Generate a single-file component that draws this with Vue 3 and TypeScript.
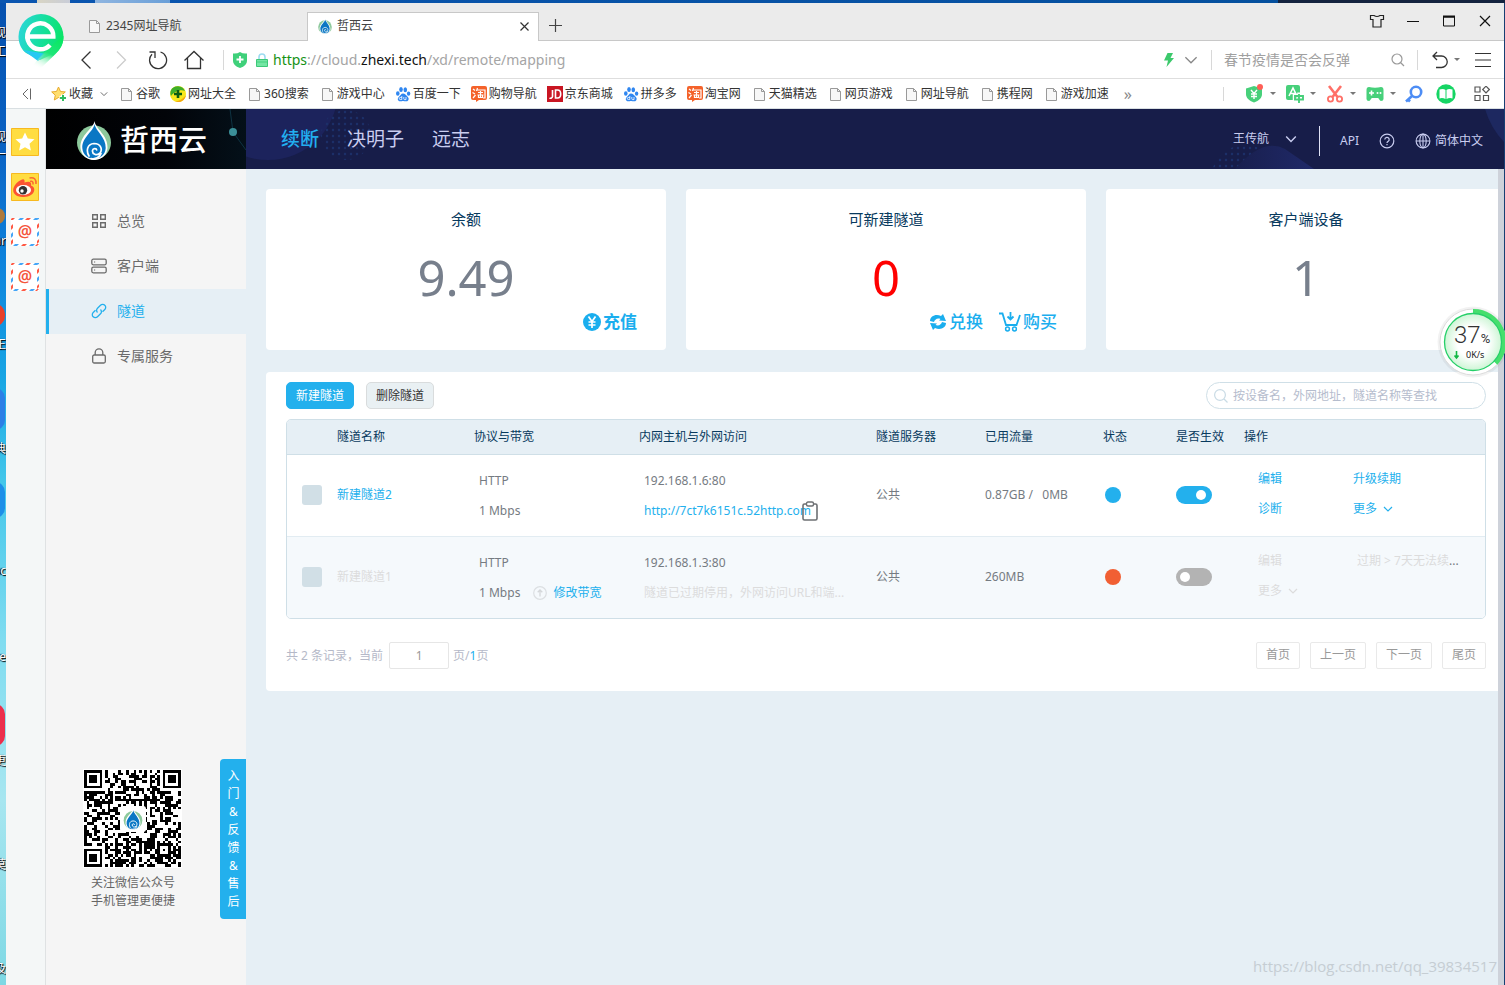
<script setup lang="ts">
import { ref } from 'vue'

interface Bookmark { icon: string; label: string }
interface DesktopLabel { text: string; y: number }
interface Tunnel {
  name: string
  host: string
  url: string
  traffic: string
  expired: boolean
  enabled: boolean
  selected: boolean
}

const bookmarks: Bookmark[] = [
  { icon: 'page', label: '谷歌' },
  { icon: 'plus360', label: '网址大全' },
  { icon: 'page', label: '360搜索' },
  { icon: 'page', label: '游戏中心' },
  { icon: 'paw', label: '百度一下' },
  { icon: 'tao', label: '购物导航' },
  { icon: 'jd', label: '京东商城' },
  { icon: 'paw', label: '拼多多' },
  { icon: 'tao', label: '淘宝网' },
  { icon: 'page', label: '天猫精选' },
  { icon: 'page', label: '网页游戏' },
  { icon: 'page', label: '网址导航' },
  { icon: 'page', label: '携程网' },
  { icon: 'page', label: '游戏加速' },
]

const tools = [
  { icon: 'yenshield', label: '购物助手', caret: true },
  { icon: 'translate', label: '翻译', caret: true },
  { icon: 'scissors', label: '截图', caret: true },
  { icon: 'gamepad', label: '游戏', caret: true },
]

const menu = [
  { icon: 'grid', label: '总览', active: false },
  { icon: 'server', label: '客户端', active: false },
  { icon: 'link', label: '隧道', active: true },
  { icon: 'lock', label: '专属服务', active: false },
]

const desktopLabels: DesktopLabel[] = [
  { text: '现', y: 24 },
  { text: '工', y: 43 },
  { text: '现', y: 128 },
  { text: '一', y: 146 },
  { text: 'ar', y: 232 },
  { text: '正', y: 336 },
  { text: '典', y: 440 },
  { text: 'oc', y: 562 },
  { text: 'e', y: 648 },
  { text: '更', y: 752 },
  { text: '莫', y: 856 },
  { text: '及', y: 960 },
]

const tunnels = ref<Tunnel[]>([
  { name: '新建隧道2', host: '192.168.1.6:80', url: 'http://7ct7k6151c.52http.com', traffic: '0.87GB /\u00a0 \u00a00MB', expired: false, enabled: true, selected: false },
  { name: '新建隧道1', host: '192.168.1.3:80', url: '', traffic: '260MB', expired: true, enabled: false, selected: false },
])

const keyword = ref('')
const pageNo = ref('1')

/* Modules of the follow-us code: three finders, one alignment mark, data elsewhere. */
const N = 37
function finder(x: number, y: number, ox: number, oy: number): boolean | null {
  const dx = x - ox
  const dy = y - oy
  if (dx < -1 || dy < -1 || dx > 7 || dy > 7) return null
  if (dx < 0 || dy < 0 || dx > 6 || dy > 6) return false
  const ring = Math.max(Math.abs(dx - 3), Math.abs(dy - 3))
  return ring !== 2
}
function buildCode(): string {
  let seed = 20394
  let d = ''
  for (let y = 0; y < N; y++) {
    for (let x = 0; x < N; x++) {
      seed = (seed * 1103515245 + 12345) % 2147483648
      let on = (seed >> 12) % 100 < 50
      for (const [ox, oy] of [[0, 0], [N - 7, 0], [0, N - 7]]) {
        const f = finder(x, y, ox, oy)
        if (f !== null) on = f
      }
      const a = Math.max(Math.abs(x - 30), Math.abs(y - 30))
      if (a <= 2) on = a !== 1
      if (on) d += `M${x} ${y}h1v1h-1z`
    }
  }
  return d
}
const codePath = buildCode()
</script>

<template>
  <div class="desktop">
    <svg width="0" height="0" class="sprite" aria-hidden="true">
      <symbol id="page" viewBox="0 0 16 16"><path d="M3.500 2.500h7l3 3v9h-10z" fill="#f7f7f7" stroke="#999" /><path d="M10.500 2.500v3h3" fill="none" stroke="#999" /></symbol>
      <symbol id="plus360" viewBox="0 0 16 16"><circle cx="8" cy="8" r="8" fill="#f8e71c" /><path d="M1 4A8 8 0 0 1 15 5C10 3 4 6 1 10A8 8 0 0 1 1 4z" fill="#3fae29" /><path d="M16 9A8 8 0 0 1 5 15.500C10 15 14 12 16 9z" fill="#f5a80c" /><path d="M8 4v8M4 8h8" stroke="#0a5c12" stroke-width="2.600" /></symbol>
      <symbol id="paw" viewBox="0 0 16 16"><g fill="#2f86f0"><ellipse cx="2.800" cy="7.500" rx="1.800" ry="2.300" /><ellipse cx="6" cy="3.600" rx="1.800" ry="2.500" /><ellipse cx="10.300" cy="3.700" rx="1.800" ry="2.500" /><ellipse cx="13.600" cy="7.600" rx="1.700" ry="2.200" /><path d="M8 7.500c-2 0-2.500 2-4 3.300C2 12.500 2.600 15.300 5.300 15.300c1.200 0 1.800-.3 2.900-.3s2 .4 3.200.3c2.400-.2 3-3 1.200-4.600C11 9.300 10 7.500 8 7.500z" /></g><path d="M6.800 10v3.500H5.300a1 1 0 0 1 0-2h1.500M8.800 11v1.800q0 .8.800.8h1.400V11" stroke="#fff" stroke-width=".8" fill="none" /></symbol>
      <symbol id="tao" viewBox="0 0 16 16"><path d="M2 0h12a2 2 0 0 1 2 2v10a2 2 0 0 1-2 2H8l-3 2v-2H2a2 2 0 0 1-2-2V2a2 2 0 0 1 2-2z" fill="#f4622a" /><path d="M2 3l2 1.500M1.500 6.500L4 8M2 12l2.500-3M6.500 2L5.500 5M6 4h8v8h-2M7 6.500h5M6.500 9h6M9.500 5v6.500M7.500 9.500v2h4v-2" fill="none" stroke="#fff" stroke-width="1.200" /></symbol>
      <symbol id="jd" viewBox="0 0 16 16"><path d="M0 0h16v16H0z" fill="#c91623" /><path d="M5.500 4v6.500a2 2 0 0 1-3 1.500M8.500 4v8h2q3.200 0 3.200-4T10.500 4z" fill="none" stroke="#fff" stroke-width="1.600" /></symbol>
      <symbol id="yenshield" viewBox="0 0 20 20"><path d="M9 2l8 2.500V10c0 4-3 6.500-8 8.500C4 16.500 1 14 1 10V4.500z" fill="#47d07a" /><path d="M6 6l3 3.500L12 6M9 9.500V15M6 10h6M6 12.500h6" stroke="#fff" stroke-width="1.400" fill="none" /><circle cx="15" cy="3" r="3" fill="#ff5f57" /></symbol>
      <symbol id="translate" viewBox="0 0 20 20"><path d="M3 1h10q2 0 2 2v13H3q-2 0-2-2V3q0-2 2-2z" fill="#47d07a" /><path d="M4 12L8 4l4 8M5.500 9.500h5" stroke="#fff" stroke-width="1.600" fill="none" /><path d="M14 8.500v10M9.500 11.500h9v4h-9z" fill="none" stroke="#fff" stroke-width="3.500" /><path d="M14 10v9M10 12h8v3.500h-8z" fill="none" stroke="#47d07a" stroke-width="1.900" /></symbol>
      <symbol id="scissors" viewBox="0 0 20 20"><path d="M4 2l8.500 11M16 2L7.500 13" stroke="#ff7068" stroke-width="2.600" fill="none" /><circle cx="5.500" cy="15" r="2.600" fill="none" stroke="#ff7068" stroke-width="1.800" /><circle cx="14.500" cy="15" r="2.600" fill="none" stroke="#ff7068" stroke-width="1.800" /></symbol>
      <symbol id="gamepad" viewBox="0 0 20 20"><path d="M4 3q6 1.500 12 0q2.500 0 2.500 3v9q0 2-2.500 2c-1.500 0-2-3-3-3H7c-1 0-1.500 3-3 3q-2.500 0-2.500-2V6q0-3 2.500-3z" fill="#47d07a" /><path d="M6.500 6.500v5M4 9h5" stroke="#fff" stroke-width="1.600" /><circle cx="12.500" cy="9" r="1" fill="#fff" /><circle cx="15.500" cy="9" r="1" fill="#fff" /></symbol>
      <symbol id="drop" viewBox="0 0 34 40"><circle cx="17" cy="22.500" r="17" fill="#8dc99c" /><path d="M17.500 1C17 8 2.500 15 3.500 28c.8 8 7 12 13.500 12s13-4 13.500-12C31 15 18.500 9 17.500 1z" fill="#fff" /><path d="M17.500 4C17 11 5 17 5.300 28c.5 7 6 10.800 11.700 10.800S28.300 35 28.700 28C29 17 18.500 11 17.500 4z" fill="#0a77c4" /><path d="M12 36c-3-5-2-12 5-12.500 7 0 9 6.500 5.500 10-3 2.500-7.500.5-7-3 .5-2.500 4-2.500 4.200-.5M14 38.500c4 1 9-1 10-5" fill="none" stroke="#fff" stroke-width="1.700" stroke-linecap="round" /></symbol>
      <symbol id="grid" viewBox="0 0 16 16"><path d="M1.700 1.700h4.600v4.600H1.700zM9.700 1.700h4.600v4.600H9.700zM1.700 9.700h4.600v4.600H1.700zM9.700 9.700h4.600v4.600H9.700z" fill="none" stroke="currentColor" stroke-width="1.400" /></symbol>
      <symbol id="server" viewBox="0 0 16 16"><rect x=".8" y="1.200" width="14.400" height="5.600" rx="1.500" fill="none" stroke="currentColor" stroke-width="1.300" /><rect x=".8" y="9.200" width="14.400" height="5.600" rx="1.500" fill="none" stroke="currentColor" stroke-width="1.300" /><path d="M3 4h1.200M3 12h1.200" stroke="currentColor" /></symbol>
      <symbol id="link" viewBox="0 0 16 16"><g fill="none" stroke="currentColor" stroke-width="1.300"><path d="M6.500 9.500a3 3 0 0 1 0-4.300l3-3a3 3 0 0 1 4.300 0 3 3 0 0 1 0 4.300L11.500 8.800" /><path d="M9.500 6.500a3 3 0 0 1 0 4.300l-3 3a3 3 0 0 1-4.300 0 3 3 0 0 1 0-4.300L4.500 7.200" /></g></symbol>
      <symbol id="lock" viewBox="0 0 16 16"><path d="M4.200 7V4.600a3.800 3.800 0 0 1 7.600 0V7" fill="none" stroke="currentColor" stroke-width="1.300" /><rect x="1.700" y="7" width="12.600" height="8" rx="1.500" fill="none" stroke="currentColor" stroke-width="1.300" /></symbol>
      <symbol id="chevron" viewBox="0 0 10 10"><path d="M1 3l4 4 4-4" fill="none" stroke="currentColor" stroke-width="1.200" /></symbol>
      <symbol id="stripmail" viewBox="0 0 28 28">
        <path d="M0 0h28v28H0z" fill="#fff" />
        <path d="M1 0h3L2 2H0V1zM16 0h4l-2 2h-4zM28 5v4l-2 2V7zM28 21v3l-2 2v-3zM12 26h4l-2 2h-4zM26 26h2l-2 2h-2zM0 8l2-2v4l-2 2zM0 23l2-2v4l-2 2z" fill="#ff5a45" />
        <path d="M9 0h4l-2 2H7zM24 0h4v1l-2 1h-4zM28 13v4l-2 2v-4zM20 26h4l-2 2h-4zM4 26h4l-2 2H2zM0 16l2-2v4l-2 2z" fill="#45a6f7" />
      </symbol>
    </svg>

    <div class="wallpaper-icons" aria-hidden="true">
      <i class="blob b-brown"></i><i class="blob b-red"></i><i class="blob b-blue"></i><i class="blob b-sky"></i><i class="blob b-crimson"></i>
      <span v-for="(l, i) in desktopLabels" :key="i" class="wall-label" :style="{ top: l.y + 'px' }">{{ l.text }}</span>
    </div>

    <div class="window">
      <svg class="brand" width="46" height="56" viewBox="0 0 46 56" aria-hidden="true">
        <defs>
          <linearGradient id="bg1" x1="0" y1="0.300" x2="1" y2="0.500"><stop offset="0" stop-color="#2bd6d8" /><stop offset=".5" stop-color="#16dfa0" /><stop offset="1" stop-color="#0be467" /></linearGradient>
          <linearGradient id="bg2" x1=".8" y1="0" x2=".3" y2="1"><stop offset="0" stop-color="#07e862" /><stop offset=".5" stop-color="#1ee678" /><stop offset="1" stop-color="#fff" stop-opacity="0" /></linearGradient>
        </defs>
        <path d="M23 0a22.500 22.500 0 0 1 22.500 22.500c0 7-3 12-7 16L22 46 8 39C3 35 .5 29 .5 22.500A22.500 22.500 0 0 1 23 0z" fill="url(#bg1)" />
        <path d="M5 36L20 47l8-7-10-2z" fill="#27c9f2" />
        <path d="M20 45l14-14 11.500-9c0 8-3 13-8 18L24 53q-5 4-12 2z" fill="url(#bg2)" />
        <path d="M10 22.500h25.300A13 13 0 1 0 32 31" fill="none" stroke="#fff" stroke-width="4.500" />
      </svg>

      <header class="tabs">
        <div class="tab">
          <svg width="16" height="16"><use href="#page" /></svg><span>2345网址导航</span>
        </div>
        <div class="tab current">
          <svg width="14" height="16"><use href="#drop" /></svg><span>哲西云</span>
          <button class="plain close" aria-label="关闭标签"><svg width="9" height="9" viewBox="0 0 9 9"><path d="M.5.5l8 8M8.500.5l-8 8" stroke="#333" stroke-width="1.200" /></svg></button>
        </div>
        <button class="plain add" aria-label="新标签"><svg width="13" height="13" viewBox="0 0 13 13"><path d="M6.500 0v13M0 6.500h13" stroke="#444" stroke-width="1.200" /></svg></button>
        <div class="winctl">
          <button class="plain" aria-label="皮肤"><svg width="16" height="16" viewBox="0 0 16 16"><path d="M1.500 2.500h3.500q3 2 6 0h3.500v4h-2.500v7.500h-8V6.500H1.500z" fill="none" stroke="#222" stroke-width="1.200" /></svg></button>
          <button class="plain" aria-label="最小化"><svg width="12" height="12" viewBox="0 0 12 12"><path d="M0 6.500h12" stroke="#111" /></svg></button>
          <button class="plain" aria-label="最大化"><svg width="12" height="12" viewBox="0 0 12 12"><path d="M.5 2h11v9H.5z" fill="none" stroke="#111" /><path d="M0 1.500h12" stroke="#111" stroke-width="2" /></svg></button>
          <button class="plain" aria-label="关闭"><svg width="12" height="12" viewBox="0 0 12 12"><path d="M1 1l10 10M11 1L1 11" stroke="#111" stroke-width="1.200" /></svg></button>
        </div>
      </header>

      <div class="address">
        <div class="navbtns">
          <button class="plain" aria-label="后退"><svg width="20" height="20" viewBox="0 0 20 20"><path d="M14.500 1.500L6 10l8.500 8.500" fill="none" stroke="#333" stroke-width="1.300" /></svg></button>
          <button class="plain" aria-label="前进"><svg width="20" height="20" viewBox="0 0 20 20"><path d="M5 1.500l8.500 8.500L5 18.500" fill="none" stroke="#ccc" stroke-width="1.300" /></svg></button>
          <button class="plain" aria-label="刷新"><svg width="20" height="20" viewBox="0 0 20 20"><path d="M12.500 2A8.500 8.500 0 1 1 4 4.200M1.500 2H7v6" fill="none" stroke="#333" stroke-width="1.300" /></svg></button>
          <button class="plain" aria-label="主页"><svg width="20" height="20" viewBox="0 0 20 20"><path d="M.5 10.500L10 1.500l9.500 9M3.500 8v10.500h13V8" fill="none" stroke="#333" stroke-width="1.300" /></svg></button>
        </div>
        <i class="sep"></i>
        <svg class="shield" width="14" height="16" viewBox="0 0 14 16"><path d="M0 1.500Q4 2 7 0q3 2 7 1.500V9q0 4.500-7 7-7-2.500-7-7z" fill="#3fd07a" /><path d="M7 4v7M3.500 7.500h7" stroke="#fff" stroke-width="1.800" /></svg>
        <svg class="padlock" width="12" height="14" viewBox="0 0 12 14"><path d="M3 7V4a3 3 0 0 1 6 0v3" fill="none" stroke="#9edcf0" stroke-width="1.600" /><path d="M.5 6.500h11v7H.5z" fill="#74e6a4" stroke="#3cc878" /><path d="M1 9h10" stroke="#45d07f" /></svg>
        <div class="url"><span class="scheme">https</span><span>://cloud.</span><b>zhexi.tech</b><span>/xd/remote/mapping</span></div>
        <svg class="bolt" width="10" height="14" viewBox="0 0 10 14"><path d="M3.500 0H9L6.500 5H10L2.500 14 4 7.500H0z" fill="#3cc96c" /></svg>
        <svg class="down" width="14" height="14" viewBox="0 0 10 10"><path d="M1 3l4 4 4-4" fill="none" stroke="#888" stroke-width=".9" /></svg>
        <i class="sep"></i>
        <input class="quick" aria-label="搜索" placeholder="春节疫情是否会反弹">
        <button class="plain mag" aria-label="搜索"><svg width="14" height="14" viewBox="0 0 14 14"><circle cx="6" cy="6" r="5" fill="none" stroke="#999" stroke-width="1.200" /><path d="M9.500 9.500l3.500 3.500" stroke="#999" stroke-width="1.200" /></svg></button>
        <i class="sep"></i>
        <button class="plain undo" aria-label="恢复"><svg width="16" height="18" viewBox="0 0 16 18"><path d="M5 1L1 5l4 4M1 5h8.500a5.500 5.500 0 0 1 0 11.500H4" fill="none" stroke="#333" stroke-width="1.300" /></svg></button>
        <i class="caret"></i>
        <button class="plain burger" aria-label="菜单"><svg width="16" height="14" viewBox="0 0 16 14"><path d="M0 .5h16M0 7h16M0 13.500h16" stroke="#333" stroke-width="1.200" /></svg></button>
      </div>

      <nav class="bookmarks">
        <button class="plain fold" aria-label="收起"><svg width="10" height="12" viewBox="0 0 10 12"><path d="M6 1L1 6l5 5M8.500.5v11" fill="none" stroke="#666" /></svg></button>
        <a href="#" class="mark">
          <svg width="16" height="16" viewBox="0 0 16 16"><path d="M7.500 1l2 4.500 4.800.4-3.600 3.300 1 4.800-4.200-2.500L3.300 14l1-4.800L.7 5.900l4.800-.4z" fill="#ffdf70" stroke="#e8ab2d" /><path d="M12 8.500v7M8.500 12h7" stroke="#fff" stroke-width="4" /><path d="M12 9v6M9 12h6" stroke="#2fbd5e" stroke-width="2" /></svg>
          <span>收藏</span><svg class="tiny" width="8" height="8"><use href="#chevron" /></svg>
        </a>
        <a v-for="(b, i) in bookmarks" :key="i" href="#" class="mark">
          <svg width="16" height="16"><use :href="'#' + b.icon" /></svg><span>{{ b.label }}</span>
        </a>
        <span class="more">»</span>
        <div class="tools">
          <i class="sep small"></i>
          <span v-for="t in tools" :key="t.icon" class="tool">
            <button class="plain" :aria-label="t.label"><svg width="20" height="20"><use :href="'#' + t.icon" /></svg></button><i class="caret"></i>
          </span>
          <button class="plain key" aria-label="查找"><svg width="20" height="20" viewBox="0 0 20 20"><circle cx="12" cy="8" r="5.200" fill="none" stroke="#4d8df5" stroke-width="2.600" /><path d="M8 12l-6 5.500M4 15.500l2 2" stroke="#4d8df5" stroke-width="2.600" /></svg></button>
          <button class="plain book" aria-label="阅读"><svg width="20" height="20" viewBox="0 0 20 20"><circle cx="10" cy="10" r="9.700" fill="#16d564" /><path d="M3.500 5.500q4-1 6 .5v9q-3-1.500-6-.5zM16.500 5.500q-4-1-6 .5v9q3-1.500 6-.5z" fill="#fff" /></svg></button>
          <button class="plain apps" aria-label="扩展"><svg width="16" height="16" viewBox="0 0 16 16"><path d="M1 1h5v5H1zM1 9.500h5v5H1zM9.500 9.500h5v5h-5zM12 .2l3.300 3.300L12 6.800 8.700 3.500z" fill="none" stroke="#555" stroke-width="1.200" /></svg></button>
        </div>
      </nav>

      <div class="page">
        <aside class="strip">
          <button class="plain" aria-label="收藏夹"><svg width="28" height="28" viewBox="0 0 28 28"><path d="M.5.5h27v27H.5z" fill="#ffdd42" stroke="#f7b920" /><path d="M14 4.500l2.800 6 6.700.8-5 4.500 1.400 6.700-5.900-3.300-5.900 3.300 1.400-6.700-5-4.500 6.700-.8z" fill="#fff" /></svg></button>
          <button class="plain" aria-label="微博"><svg width="28" height="28" viewBox="0 0 28 28"><path d="M.5.5h27v27H.5z" fill="#ffdd42" stroke="#f7b920" /><path d="M10 7c3-2 4 0 3.500 2.500 5-2 7.500 0 6.500 3 6 2 4 11-7 11.500C5 24.500 1 20 2.500 15 4 11 7 8.500 10 7z" fill="#fb5432" /><ellipse cx="12.500" cy="17" rx="7.500" ry="5" fill="#fff" /><circle cx="12" cy="17.200" r="4.200" fill="#333" /><circle cx="11" cy="18" r="1.700" fill="#fff" /><path d="M18.500 5q7-1.500 6.500 6M19 8.500q3.500-1 3 3" fill="none" stroke="#fb6a32" stroke-width="1.600" /></svg></button>
          <button v-for="n in 2" :key="n" class="plain mail" aria-label="邮箱"><svg width="28" height="28"><use href="#stripmail" /></svg><span>@</span></button>
        </aside>

        <div class="app">
          <header class="apphead">
            <div class="logo">
              <svg width="34" height="40"><use href="#drop" /></svg><strong>哲西云</strong>
              <svg class="spark" width="40" height="60" viewBox="0 0 40 60" aria-hidden="true"><path d="M24 0l3 23 13 18" fill="none" stroke="#0e3342" /><circle cx="27" cy="23" r="4" fill="#3b8f98" /></svg>
            </div>
            <svg class="decor left" width="130" height="60" viewBox="0 0 130 60" aria-hidden="true">
              <defs><pattern id="dots" width="6" height="6" patternUnits="userSpaceOnUse"><circle cx="3" cy="3" r="1.200" fill="#1b2f68" /></pattern></defs>
              <circle cx="22" cy="-19" r="70" fill="#1c235c" /><circle cx="100" cy="26" r="25" fill="url(#dots)" />
            </svg>
            <nav class="topnav"><a href="#" class="on">续断</a><a href="#">决明子</a><a href="#">远志</a></nav>
            <svg class="decor right" width="300" height="60" viewBox="0 0 300 60" aria-hidden="true">
              <defs><linearGradient id="hill" x1="0" x2="1"><stop offset="0" stop-color="#191f4e" /><stop offset="1" stop-color="#1f2968" /></linearGradient></defs>
              <circle cx="40" cy="70" r="34" fill="url(#dots)" /><path d="M30 60q28-32 50-20l29 20z" fill="url(#hill)" /><path d="M280 0h20v34q-14-14-20-34z" fill="#1d2860" />
            </svg>
            <div class="user">
              <button class="plain me">王传航<svg width="12" height="12"><use href="#chevron" /></svg></button>
              <a href="#" class="api">API</a>
              <a href="#" aria-label="帮助" class="help"><svg width="16" height="16" viewBox="0 0 16 16"><circle cx="8" cy="8" r="6.800" fill="none" stroke="#c9cdf0" stroke-width="1.200" /><path d="M5.800 6.500a2.200 2.200 0 1 1 3.300 1.900q-1.100.6-1.100 1.500M8 11v1.300" fill="none" stroke="#c9cdf0" stroke-width="1.200" /></svg></a>
              <a href="#" class="lang"><svg width="16" height="16" viewBox="0 0 16 16"><g fill="none" stroke="#c9cdf0" stroke-width="1.100"><circle cx="8" cy="8" r="6.900" /><ellipse cx="8" cy="8" rx="3.200" ry="6.900" /><path d="M1 8h14M8 1v14" /></g></svg>简体中文</a>
            </div>
          </header>

          <div class="body">
            <aside class="side">
              <nav>
                <a v-for="m in menu" :key="m.label" href="#" :class="['item', { active: m.active }]">
                  <svg width="16" height="16"><use :href="'#' + m.icon" /></svg>{{ m.label }}
                </a>
              </nav>
              <div class="follow">
                <div class="code">
                  <svg class="modules" viewBox="0 0 37 37" shape-rendering="crispEdges" role="img" aria-label="微信公众号二维码"><path :d="codePath" fill="#000" /></svg>
                  <span class="center"><svg width="20" height="22"><use href="#drop" /></svg></span>
                </div>
                <p>关注微信公众号</p><p>手机管理更便捷</p>
              </div>
              <button class="feedback"><span>入</span><span>门</span><span>&amp;</span><span>反</span><span>馈</span><span>&amp;</span><span>售</span><span>后</span></button>
            </aside>

            <main class="main">
              <div class="inner">
                <section class="cards">
                  <article class="card">
                    <h2>余额</h2><p class="num">9.49</p>
                    <div class="acts"><a href="#"><svg width="18" height="18" viewBox="0 0 18 18"><circle cx="9" cy="9" r="9" fill="#1aaeee" /><path d="M5.500 3.500L9 8.500l3.500-5M9 8.500V15M5.500 9h7M5.500 12h7" fill="none" stroke="#fff" stroke-width="1.700" /></svg>充值</a></div>
                  </article>
                  <article class="card">
                    <h2>可新建隧道</h2><p class="num alert">0</p>
                    <div class="acts">
                      <a href="#" class="light"><svg width="18" height="18" viewBox="0 0 18 18"><path d="M1 8C1 3 7 .5 12 3l2-2 3 7-7-.5L11.500 6C8 4.500 5.500 7 5 9zM17 10c0 5-6 7.500-11 5l-2 2-3-7 7 .5L6.500 12c3.500 1.500 6-1 6.500-3z" fill="#1aaeee" /></svg>兑换</a>
                      <a href="#" class="light"><svg width="22" height="20" viewBox="0 0 22 20"><path d="M0 1.500h3.500L7 13h10.500L21 3M11.500 0v7M8.500 4.500l3 3 3-3" fill="none" stroke="#1aaeee" stroke-width="1.800" /><circle cx="8.500" cy="17" r="1.900" fill="none" stroke="#1aaeee" stroke-width="1.500" /><circle cx="15.500" cy="17" r="1.900" fill="none" stroke="#1aaeee" stroke-width="1.500" /></svg>购买</a>
                    </div>
                  </article>
                  <article class="card"><h2>客户端设备</h2><p class="num">1</p></article>
                </section>

                <section class="panel">
                  <div class="bar">
                    <button class="btn primary">新建隧道</button>
                    <button class="btn">删除隧道</button>
                    <label class="find">
                      <svg width="14" height="14" viewBox="0 0 14 14"><circle cx="6" cy="6" r="5.400" fill="none" stroke="#c9dbe5" stroke-width="1.200" /><path d="M10 10l3.500 3.500" stroke="#c9dbe5" stroke-width="1.200" /></svg>
                      <input v-model="keyword" aria-label="查找隧道" placeholder="按设备名，外网地址，隧道名称等查找">
                    </label>
                  </div>

                  <div class="frame">
                    <table>
                      <colgroup><col class="c1"><col class="c2"><col class="c3"><col class="c4"><col class="c5"><col class="c6"><col class="c7"><col class="c8"><col></colgroup>
                      <thead><tr><th></th><th>隧道名称</th><th>协议与带宽</th><th>内网主机与外网访问</th><th>隧道服务器</th><th>已用流量</th><th>状态</th><th>是否生效</th><th>操作</th></tr></thead>
                      <tbody>
                        <tr v-for="t in tunnels" :key="t.name" :class="{ expired: t.expired }">
                          <td class="pick"><input v-model="t.selected" type="checkbox" class="check" :aria-label="'选择' + t.name"></td>
                          <td class="name"><a href="#">{{ t.name }}</a></td>
                          <td class="indent">
                            <div class="line">HTTP</div>
                            <div class="line">1 Mbps<a v-if="t.expired" href="#" class="bw"><svg width="14" height="14" viewBox="0 0 14 14"><circle cx="7" cy="7" r="6.300" fill="none" stroke="#dcdfe2" stroke-width="1.200" /><path d="M7 10.500V4M4.700 6.300L7 4l2.300 2.300" fill="none" stroke="#d4d7da" stroke-width="1.300" /></svg>修改带宽</a></div>
                          </td>
                          <td class="indent">
                            <div class="line">{{ t.host }}</div>
                            <div v-if="t.expired" class="line faint">隧道已过期停用，外网访问URL和端...</div>
                            <div v-else class="line"><span class="copyable"><a href="#">{{ t.url }}</a><button class="plain copy" aria-label="复制"><svg width="16" height="20" viewBox="0 0 16 20"><rect x="1" y="3" width="14" height="16" rx="1.500" fill="none" stroke="#6d7073" stroke-width="1.600" /><rect x="4.500" y="1" width="7" height="4" rx="1.500" fill="#fff" stroke="#6d7073" stroke-width="1.400" /></svg></button></span></div>
                          </td>
                          <td>公共</td>
                          <td>{{ t.traffic }}</td>
                          <td class="state"><i :class="['dot', { bad: t.expired }]"></i></td>
                          <td><input v-model="t.enabled" type="checkbox" role="switch" class="switch" :aria-label="t.name + '是否生效'"></td>
                          <td>
                            <div v-if="!t.expired" class="ops"><a href="#">编辑</a><a href="#">升级续期</a><a href="#">诊断</a><a href="#">更多<svg width="10" height="10"><use href="#chevron" /></svg></a></div>
                            <div v-else class="ops faint"><span>编辑</span><span class="late">过期 &gt; 7天无法续<em>...</em></span><span>更多<svg width="10" height="10"><use href="#chevron" /></svg></span></div>
                          </td>
                        </tr>
                      </tbody>
                    </table>
                  </div>

                  <div class="pager">
                    <label>共 2 条记录，当前 <input v-model="pageNo" aria-label="页码"></label><span>页/<b>1</b>页</span>
                    <div class="pages"><button>首页</button><button>上一页</button><button>下一页</button><button>尾页</button></div>
                  </div>
                </section>
              </div>
            </main>
            <div class="scroll"></div>
          </div>
        </div>
      </div>
    </div>

    <div class="ball" aria-hidden="true">
      <svg width="72" height="72" viewBox="0 0 72 72">
        <defs><radialGradient id="bl"><stop offset=".55" stop-color="#fff" /><stop offset="1" stop-color="#cdf5d5" /></radialGradient></defs>
        <circle cx="36" cy="36" r="35.500" fill="#000" opacity=".05" />
        <circle cx="36" cy="36" r="33" fill="#fff" stroke="#dcdcdc" />
        <path d="M36 5.500A30.500 30.500 0 0 1 58.500 57" fill="none" stroke="#45df6d" stroke-width="5" />
        <circle cx="36" cy="36" r="28.500" fill="url(#bl)" stroke="#25cf68" stroke-width="1.300" />
        <path d="M19.500 45v6M17.500 49.500l2 2.500 2-2.500" stroke="#12b843" stroke-width="1.600" fill="none" />
      </svg>
      <span class="pct">37<small>%</small></span><span class="rate">0K/s</span>
    </div>
    <div class="credit">https://blog.csdn.net/qq_39834517</div>
  </div>
</template>

<style>
body { margin: 0; overflow: hidden; }
</style>

<style scoped>
.desktop, .desktop * { box-sizing: border-box; }
.desktop {
  position: relative; display: flex; min-height: 100vh; padding: 3px 1px 0 6px; overflow: hidden;
  background:
    linear-gradient(90deg, transparent 37px, #d9d5c4 37px, #c9cdd8 70px, transparent 70px, transparent 95px, #8fb5e0 95px, #6a9fd8 170px, transparent 170px) 0 0 / 100% 3px no-repeat,
    linear-gradient(90deg, #0a55b0 0, #05509e 1278px, #14233f 1278px) 0 0 / 100% 3px no-repeat,
    linear-gradient(90deg, transparent calc(100% - 1px), #173f73 0),
    linear-gradient(180deg, #0650ae 0, #0a63c4 150px, #0d83dc 260px, #18a6e4 380px, #42c6ea 480px, #7fdcf0 640px, #a7e6f0 800px, #7dd8e4 985px);
  font: 12px/18px "Noto Sans", "Noto Sans CJK SC", sans-serif; color: #444;
}
.sprite { position: absolute; }
a { color: inherit; text-decoration: none; }
p, h2 { margin: 0; font-weight: 400; }
svg { flex: none; display: block; }
input { font: inherit; color: inherit; min-width: 0; margin: 0; }
.plain { display: flex; align-items: center; justify-content: center; padding: 0; border: 0; background: none; font: inherit; color: inherit; flex: none; }
.wallpaper-icons { position: absolute; left: 0; top: 0; width: 6px; height: 100%; overflow: hidden; }
.wall-label { position: absolute; right: 0; color: #fff; text-shadow: 1px 1px 1px #000, -1px 0 1px #000; white-space: nowrap; }
.blob { position: absolute; right: 1px; width: 30px; border-radius: 10px; }
.b-brown { top: 208px; height: 16px; background: #b07a3a; }
.b-red { top: 304px; height: 22px; background: #e8402a; }
.b-blue { top: 388px; height: 42px; background: #2c7fe6; }
.b-sky { top: 482px; height: 36px; background: #1d8fe8; }
.b-crimson { top: 704px; height: 42px; background: #ec2f4c; }

.window { position: relative; flex: 1; min-width: 0; display: flex; flex-direction: column; background: #fff; }
.brand { position: absolute; left: 12px; top: 11px; z-index: 2; }

.tabs { display: flex; align-items: flex-end; height: 38px; background: #ebebeb; border-bottom: 1px solid #c8c8c8; color: #444; }
.tab { display: flex; align-items: center; gap: 4px; height: 29px; margin-left: 80px; width: 221px; }
.tab.current { margin: 0 0 -1px; width: 232px; padding: 0 8px 2px 10px; gap: 5px; background: #fff; border: 1px solid #c8c8c8; border-bottom: 0; }
.close { margin-left: auto; width: 11px; height: 20px; }
.add { width: 13px; height: 29px; margin-left: 10px; }
.winctl { display: flex; margin-left: auto; height: 38px; padding-right: 1px; }
.winctl .plain { width: 36px; }

.address { display: flex; align-items: center; height: 38px; border-bottom: 1px solid #dedede; padding-right: 13px; }
.navbtns { display: flex; padding-left: 62px; }
.navbtns .plain { width: 36px; height: 30px; }
.sep { width: 1px; height: 20px; background: #d8d8d8; flex: none; }
.navbtns + .sep { margin-left: 11px; }
.shield { margin-left: 9px; }
.padlock { margin-left: 9px; }
.url { flex: 1; margin-left: 5px; font: 14px/20px "Noto Sans", sans-serif; color: #a5a5a5; }
.url b { font-weight: 400; color: #111; }
.url .scheme { color: #159215; }
.down { margin: 0 13px 0 10px; }
.quick { border: 0; outline: 0; width: 160px; padding: 0 0 0 12px; font-size: 14px; background: none; }
.quick::placeholder { color: #a0a0a0; opacity: 1; }
.mag { width: 14px; margin: 0 12px 0 19px; }
.undo { margin-left: 14px; }
.caret { width: 0; height: 0; border: 3px solid transparent; border-top-color: #777; border-bottom: 0; flex: none; }
.address .caret { margin-left: 6px; }
.burger { margin-left: 15px; }

.bookmarks { display: flex; align-items: center; gap: 10px; height: 30px; border-bottom: 1px solid #d9dfe2; padding: 0 14px 0 15px; white-space: nowrap; color: #333; }
.fold { width: 12px; margin-right: 8px; }
.mark { display: flex; align-items: center; gap: 2px; }
.tiny { margin-left: 5px; color: #666; }
.more { margin-left: 5px; font-size: 16px; color: #888; }
.tools { display: flex; align-items: center; margin-left: auto; }
.sep.small { height: 14px; margin-right: 21px; }
.tool { display: flex; align-items: center; gap: 5px; width: 40px; }
.key { margin-right: 12px; margin-left: -1px; }
.apps { margin-left: 18px; }

.page { flex: 1; display: flex; min-height: 0; }
.strip { width: 40px; background: #f4f7f7; border-right: 1px solid #dfe2e3; display: flex; flex-direction: column; align-items: center; gap: 17px; padding: 19px 1px 0 0; flex: none; }
.strip .plain { height: 28px; }
.mail { display: grid; place-items: center; }
.mail > * { grid-area: 1 / 1; }
.mail span { font-size: 16px; line-height: 22px; font-weight: 600; color: #f4553c; padding-bottom: 2px; }

.app { flex: 1; min-width: 0; display: flex; flex-direction: column; }
.apphead { position: relative; display: flex; align-items: center; height: 60px; background: #171d49; color: #c9cdf0; flex: none; overflow: hidden; }
.logo { position: relative; z-index: 1; width: 200px; height: 60px; display: flex; align-items: center; gap: 9px; padding: 2px 0 0 31px; background: linear-gradient(90deg, #000, #020409 60%, #041019); color: #fff; flex: none; }
.logo strong { font-size: 29px; line-height: 40px; font-weight: 500; }
.spark { position: absolute; right: 0; top: 0; }
.decor { position: absolute; top: 0; }
.decor.left { left: 200px; }
.decor.right { right: -1px; }
.topnav { position: relative; display: flex; gap: 28px; padding-left: 35px; font-size: 19px; line-height: 28px; }
.topnav .on { color: #22aef0; font-weight: 500; }
.user { position: relative; display: flex; align-items: center; margin: 4px 0 0 auto; padding-right: 21px; height: 30px; }
.me { gap: 16px; height: 30px; padding: 0 22px 4px 0; }
.api { border-left: 1px solid #dfe2f5; padding: 6px 0 6px 20px; }
.help { margin-left: 20px; }
.lang { display: flex; align-items: center; gap: 4px; margin-left: 20px; }

.body { flex: 1; display: flex; min-height: 0; }
.side { position: relative; width: 200px; background: #f5f5f5; display: flex; flex-direction: column; padding: 30px 0 75px; flex: none; }
.item { display: flex; align-items: center; gap: 10px; height: 45px; padding: 0 0 2px 42px; border-left: 3px solid transparent; font-size: 14px; color: #6b6b6b; }
.item.active { background: #e6eff5; border-color: #23b0ed; color: #23b0ed; }
.follow { margin-top: auto; padding-left: 37px; color: #666; }
.follow p { padding-left: 8px; }
.code { display: grid; place-items: center; width: 99px; height: 99px; margin-bottom: 6px; background: #fff; }
.code > * { grid-area: 1 / 1; }
.modules { width: 97px; height: 97px; }
.center { display: grid; place-items: center; width: 26px; height: 26px; background: #fff; border-radius: 3px; }
.feedback { position: absolute; right: 0; bottom: 66px; width: 26px; display: flex; flex-direction: column; align-items: center; padding: 8px 0 8px 1px; border: 0; border-radius: 4px 0 0 4px; background: #23b0ed; color: #fff; font: inherit; }

.main { flex: 1; min-width: 0; overflow: hidden; background: #e6eff5; padding: 20px 0 0 20px; }
.inner { margin-right: -8px; }
.scroll { width: 6px; background: #ced2da; flex: none; }
.cards { display: grid; grid-template-columns: repeat(3, 1fr); gap: 20px; }
.card { background: #fff; border-radius: 4px; height: 161px; padding-top: 19px; text-align: center; }
.card h2 { font-size: 15px; line-height: 22px; color: #083a5e; }
.num { margin-top: 15px; font-size: 49px; line-height: 64px; color: #777f8c; }
.num.alert { color: #f00; }
.acts { display: flex; justify-content: flex-end; gap: 16px; margin-top: 1px; padding-right: 29px; font-size: 17px; line-height: 24px; font-weight: 700; color: #1aaeee; }
.acts a { display: flex; align-items: center; gap: 2px; }
.acts .light { font-weight: 500; }

.panel { margin-top: 22px; background: #fff; border-radius: 4px; padding: 10px 20px 22px; }
.bar { display: flex; gap: 12px; margin-bottom: 10px; }
.btn { height: 27px; padding: 0 9px; border: 1px solid #d9dcdd; border-radius: 5px; background: #e9f0f3; color: #333; font: inherit; }
.btn.primary { background: #23b0ed; border-color: #23b0ed; color: #fff; }
.find { margin-left: auto; width: 280px; height: 27px; display: flex; align-items: center; gap: 5px; padding: 0 8px 0 7px; border: 1px solid #cfdfe7; border-radius: 14px; }
.find input { flex: 1; border: 0; outline: 0; padding: 0; background: none; }
.find input::placeholder { color: #b5bccd; opacity: 1; }

.frame { border: 1px solid #cfdfe7; border-radius: 5px; overflow: hidden; }
table { width: 100%; border-collapse: collapse; table-layout: fixed; color: #757b82; }
th, td { padding: 0; text-align: left; font-weight: 400; white-space: nowrap; }
th { height: 34px; background: #e6eff5; color: #083a5e; border-bottom: 1px solid #cfdfe7; }
td { height: 82px; }
tr.expired td { background: #f5f9fc; border-top: 1px solid #e2ecf2; }
.c1 { width: 50px; } .c2 { width: 137px; } .c3 { width: 165px; } .c4 { width: 237px; } .c5 { width: 109px; }
.c6 { width: 118px; } .c7 { width: 73px; } .c8 { width: 68px; }
td a { color: #23b0ed; }
.pick { padding-left: 15px; }
.check { appearance: none; display: block; width: 20px; height: 20px; border-radius: 3px; background: #d1dfe6; }
.indent { padding: 2px 0 0 5px; }
.line { display: flex; line-height: 30px; }
.expired .name a, .faint { color: #dcdcdc; }
.bw { display: flex; align-items: center; gap: 6px; margin-left: 13px; }
.copyable { position: relative; }
.copy { position: absolute; right: -7px; top: 5px; }
.state { padding-left: 2px; }
.dot { display: block; width: 16px; height: 16px; border-radius: 50%; background: #23b0ed; }
.dot.bad { background: #f15f33; }
.switch { appearance: none; display: block; width: 36px; height: 18px; border-radius: 9px; background: #b3b3b3; padding: 4px; }
.switch::before { content: ""; display: block; width: 10px; height: 10px; border-radius: 50%; background: #fff; }
.switch:checked { background: #23b0ed; padding-left: 20px; }
.ops { display: grid; grid-template-columns: 95px 1fr; padding: 0 0 2px 14px; line-height: 30px; }
.ops > * { display: flex; align-items: center; }
.ops svg { margin-left: 6px; }
.late { padding-left: 4px; }
.late em { font-style: normal; color: #757b82; }

.pager { display: flex; align-items: center; gap: 4px; margin-top: 23px; color: #b5b9c8; }
.pager label { display: flex; align-items: center; gap: 6px; }
.pager input { width: 60px; height: 27px; border: 1px solid #e6e6e6; border-radius: 2px; text-align: center; color: #999; padding: 0; }
.pager b { font-weight: 400; color: #23b0ed; }
.pages { display: flex; gap: 10px; margin-left: auto; }
.pages button { height: 27px; padding: 0 9px 2px; border: 1px solid #e9e9e9; border-radius: 2px; background: #fff; color: #999; font: inherit; }

.ball { position: absolute; right: -4px; top: 306px; width: 72px; height: 72px; }
.ball span { position: absolute; font-family: Roboto, sans-serif; color: #333; }
.pct { left: 17px; top: 15px; font-size: 24px; line-height: 28px; font-weight: 300; white-space: nowrap; }
.pct small { font-size: 13px; font-weight: 400; }
.ball .rate { left: 29px; top: 42px; font-family: "Noto Sans", sans-serif; font-size: 9px; line-height: 14px; color: #222; }
.credit { position: absolute; right: 8px; bottom: 8px; font: 15px/22px "Open Sans", sans-serif; color: #c5cdd3; }
</style>
